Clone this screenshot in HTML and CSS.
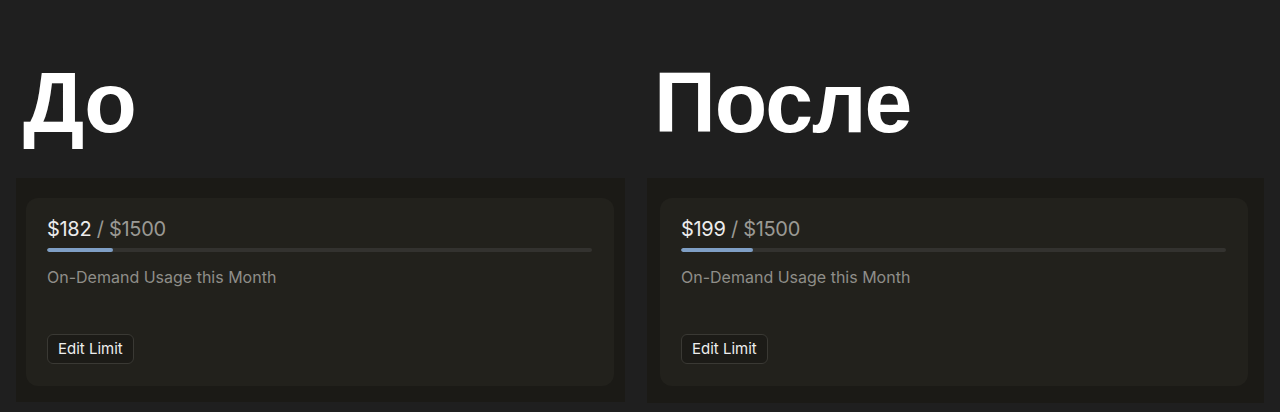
FILE: index.html
```html
<!DOCTYPE html>
<html lang="ru">
<head>
<meta charset="utf-8">
<link rel="stylesheet" href="styles.css">
</head>
<body>
<main class="compare">
  <section class="col">
    <h1 class="title">До</h1>
    <div class="panel">
      <div class="card">
        <div class="amount"><span class="used">$182</span> <span class="limit">/ $1500</span></div>
        <div class="track"><div class="fill" style="width: 12.13%"></div></div>
        <div class="label">On-Demand Usage this Month</div>
        <button class="btn">Edit Limit</button>
      </div>
    </div>
  </section>
  <section class="col">
    <h1 class="title">После</h1>
    <div class="panel">
      <div class="card">
        <div class="amount"><span class="used">$199</span> <span class="limit">/ $1500</span></div>
        <div class="track"><div class="fill" style="width: 13.27%"></div></div>
        <div class="label">On-Demand Usage this Month</div>
        <button class="btn">Edit Limit</button>
      </div>
    </div>
  </section>
</main>
</body>
</html>
```

FILE: styles.css
```css
html, body {
  margin: 0;
  padding: 0;
  background: #1f1f1f;
}
body {
  width: 1280px;
  height: 412px;
  overflow: hidden;
}
.compare {
  display: grid;
  grid-template-columns: 609px 617px;
  column-gap: 22px;
  padding: 0 16px;
}
.col {
  display: flex;
  flex-direction: column;
}
.title {
  margin: 59px 0 32px 7px;
  font-family: "Liberation Sans", Arial, sans-serif;
  font-weight: 700;
  font-size: 86px;
  line-height: 87px;
  color: #ffffff;
  letter-spacing: -1px;
}
.panel {
  background: #1b1a16;
  padding: 20px 11px 16px 10px;
}
.col + .col .panel {
  padding: 20px 16px 17px 13px;
}
.card {
  background: #22211c;
  border-radius: 12px;
  padding: 19px 22px 22px 21px;
  display: flex;
  flex-direction: column;
  align-items: flex-start;
  font-family: Inter, "Noto Sans", sans-serif;
}
.amount {
  font-size: 20px;
  line-height: 24px;
  letter-spacing: -0.3px;
}
.used { color: #ececec; }
.limit { color: #9a9994; }
.track {
  align-self: stretch;
  height: 4px;
  margin-top: 7px;
  background: #33322f;
  border-radius: 2px;
  overflow: hidden;
}
.fill {
  height: 100%;
  background: #7f9fc5;
  border-radius: 2px;
}
.label {
  margin-top: 13px;
  font-size: 16px;
  line-height: 24px;
  color: #8f8e89;
}
.btn {
  margin-top: 45px;
  font-family: Inter, "Noto Sans", sans-serif;
  font-size: 15px;
  line-height: 18px;
  color: #eeeeee;
  background: #1c1b17;
  border: 1px solid #3a3934;
  border-radius: 6px;
  padding: 5px 10px;
  height: 30px;
}
```
